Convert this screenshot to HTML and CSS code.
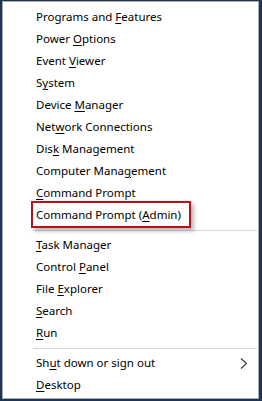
FILE: index.html
```html
<!DOCTYPE html>
<html lang="en">
<head>
    <meta charset="UTF-8">
    <meta name="viewport" content="width=device-width, initial-scale=1.0">
    <title>Quick Link Menu</title>
    <link rel="stylesheet" href="styles.css">
</head>
<body>
    <div class="menu">
        <ul class="group">
            <li>Programs and <u>F</u>eatures</li>
            <li>Power <u>O</u>ptions</li>
            <li>Event <u>V</u>iewer</li>
            <li>S<u>y</u>stem</li>
            <li>Device <u>M</u>anager</li>
            <li>Net<u>w</u>ork Connections</li>
            <li>Dis<u>k</u> Management</li>
            <li>Computer Mana<u>g</u>ement</li>
            <li><u>C</u>ommand Prompt</li>
            <li class="marked"><span class="label">Command Prompt (<u>A</u>dmin)</span></li>
        </ul>
        <hr>
        <ul class="group">
            <li><u>T</u>ask Manager</li>
            <li>Control <u>P</u>anel</li>
            <li>File <u>E</u>xplorer</li>
            <li><u>S</u>earch</li>
            <li><u>R</u>un</li>
        </ul>
        <hr>
        <ul class="group">
            <li class="sub">
                <span>Sh<u>u</u>t down or sign out</span>
                <svg class="arrow" width="8" height="11" viewBox="0 0 8 11"><path d="M1 0.5 L6.5 5.5 L1 10.5" fill="none" stroke="#333" stroke-width="1.1"/></svg>
            </li>
            <li><u>D</u>esktop</li>
        </ul>
    </div>
</body>
</html>
```

FILE: styles.css
```css
html, body {
    margin: 0;
    padding: 0;
    background: #1d3657;
}
body {
    font-family: "Noto Sans", sans-serif;
    font-size: 11.5px;
    color: #000;
    width: 262px;
    height: 401px;
}
.menu {
    box-sizing: border-box;
    width: 262px;
    height: 401px;
    background: #fff;
    border-style: solid;
    border-color: #1d3657;
    border-width: 1px 3px 2px 2px;
    box-shadow: inset 0 0 0 1px #a9a9a9;
    padding: 5px 2px 0 0;
}
.group {
    list-style: none;
    margin: 0;
    padding: 0;
}
.group li {
    height: 22px;
    line-height: 22px;
    padding-left: 34px;
    white-space: nowrap;
}
.group u {
    text-decoration-thickness: 1px;
    text-underline-offset: 2px;
}
hr {
    border: none;
    height: 1px;
    background: #d4d4d4;
    margin: 4px 0 3px 31px;
}
.marked .label {
    position: relative;
}
.marked .label::after {
    content: "";
    position: absolute;
    left: -5px;
    right: -10px;
    top: -6px;
    bottom: -6px;
    border: 2px solid #b5121b;
    box-shadow: 3px 3px 4px rgba(0, 0, 0, 0.28);
}
.sub {
    display: flex;
    align-items: center;
    justify-content: space-between;
    padding-right: 9px;
}
.arrow {
    display: block;
}
```
